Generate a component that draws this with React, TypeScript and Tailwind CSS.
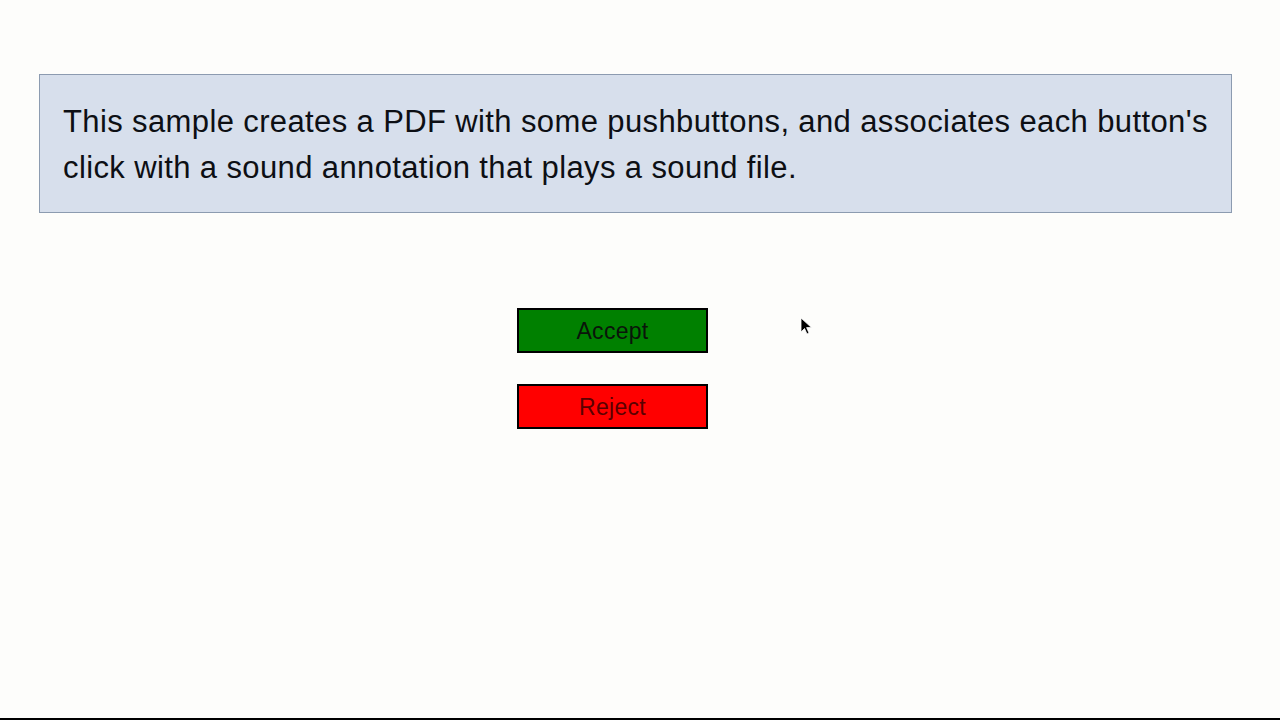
import React from "react";

function Cursor() {
  return (
    <svg
      className="absolute left-[800px] top-[317px]"
      width="14"
      height="20"
      viewBox="0 0 14 20"
    >
      <path
        d="M1 1 L1 15 L4.5 11.5 L7 17 L9 16 L6.6 10.6 L11.5 10.6 Z"
        fill="#000"
        stroke="#fff"
        strokeWidth="0.8"
      />
    </svg>
  );
}

interface iPushButton {
  label: string;
  bg: string;
  text: string;
}

function PushButton({ label, bg, text }: iPushButton) {
  return (
    <div
      className={`${bg} ${text} w-[191px] h-[45px] border-2 border-black flex items-center justify-center pt-[2px] text-[23px] leading-none tracking-[0.3px]`}
    >
      {label}
    </div>
  );
}

export default function App() {
  return (
    <div
      className="relative w-full h-[720px] bg-[#fdfdfb] border-b-2 border-black flex flex-col"
      style={{ fontFamily: '"Liberation Sans", Arial, sans-serif' }}
    >
      <div className="mt-[74px] ml-[39px] mr-[48px] h-[139px] border border-[#8c9bb0] bg-[#d7dfec] pl-[23px] pt-[24px] text-[31px] leading-[46px] text-[#0d0f14] tracking-[0.38px] whitespace-nowrap">
        <p>
          This sample creates a PDF with some pushbuttons, and associates each
          button's
        </p>
        <p>click with a sound annotation that plays a sound file.</p>
      </div>
      <div className="mt-[95px] pl-[517px] flex flex-col gap-[31px]">
        <PushButton label="Accept" bg="bg-[#008000]" text="text-[#0a140a]" />
        <PushButton label="Reject" bg="bg-[#ff0000]" text="text-[#5a0000]" />
      </div>
      <Cursor />
    </div>
  );
}
